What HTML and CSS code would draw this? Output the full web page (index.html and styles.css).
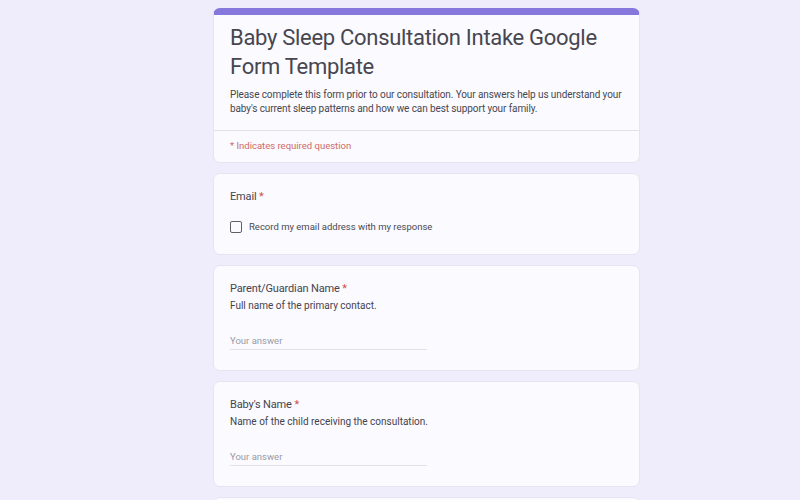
FILE: index.html
```html
<!DOCTYPE html>
<html lang="en">
<head>
<meta charset="utf-8">
<title>Baby Sleep Consultation Intake Google Form Template</title>
<link rel="stylesheet" href="styles.css">
</head>
<body>
<main class="form">
  <section class="card header-card">
    <div class="header-main">
      <h1 class="title">Baby Sleep Consultation Intake Google Form Template</h1>
      <p class="desc">Please complete this form prior to our consultation. Your answers help us understand your baby's current sleep patterns and how we can best support your family.</p>
    </div>
    <div class="required-note">* Indicates required question</div>
  </section>

  <section class="card question">
    <div class="label">Email <span class="star">*</span></div>
    <label class="check-row">
      <span class="checkbox"></span>
      <span class="check-text">Record my email address with my response</span>
    </label>
  </section>

  <section class="card question">
    <div class="label">Parent/Guardian Name <span class="star">*</span></div>
    <div class="help">Full name of the primary contact.</div>
    <div class="answer">Your answer</div>
  </section>

  <section class="card question">
    <div class="label">Baby's Name <span class="star">*</span></div>
    <div class="help">Name of the child receiving the consultation.</div>
    <div class="answer">Your answer</div>
  </section>

  <section class="card question">
    <div class="label">Baby's Date of Birth <span class="star">*</span></div>
    <div class="help">Used to tailor recommendations to your baby's age.</div>
    <div class="answer">Your answer</div>
  </section>
</main>
</body>
</html>
```

FILE: styles.css
```css
html, body {
  margin: 0;
  padding: 0;
}
body {
  background: #efedfb;
  font-family: Roboto, "Liberation Sans", Arial, sans-serif;
  color: #3f3f47;
  overflow: hidden;
  height: 500px;
}
.form {
  width: 427px;
  margin: 8px 0 0 213px;
  display: flex;
  flex-direction: column;
  gap: 10px;
}
.card {
  background: #fafaff;
  border: 1px solid #e6e4f2;
  border-radius: 7px;
  box-sizing: border-box;
}
.header-card {
  border-top: 7px solid #8478dc;
}
.header-main {
  padding: 8px 16px 15px 16px;
  border-bottom: 1px solid #e3e1ec;
}
.title {
  margin: 0;
  font-size: 22px;
  font-weight: 400;
  line-height: 29px;
  letter-spacing: -0.3px;
  color: #47464f;
}
.desc {
  margin: 7px 0 0 0;
  font-size: 10px;
  line-height: 13.5px;
  letter-spacing: -0.1px;
  color: #48474f;
}
.required-note {
  padding: 8px 16px 10px 16px;
  font-size: 9.5px;
  line-height: 13px;
  color: #cf6a66;
}
.question {
  padding: 15px 16px 20px 16px;
}
.label {
  font-size: 11px;
  line-height: 16px;
  letter-spacing: -0.15px;
  color: #45444d;
}
.star {
  color: #d0504c;
}
.check-row {
  display: flex;
  align-items: center;
  gap: 7px;
  margin-top: 15px;
}
.checkbox {
  width: 10px;
  height: 10px;
  border: 1.5px solid #5f5f66;
  border-radius: 2px;
  flex: none;
}
.check-text {
  font-size: 9.5px;
  line-height: 14px;
  color: #4a4a52;
}
.help {
  margin-top: 2px;
  font-size: 10px;
  line-height: 14px;
  color: #45444d;
}
.answer {
  margin-top: 19px;
  width: 197px;
  font-size: 9.5px;
  line-height: 17px;
  color: #9b9ba3;
  border-bottom: 1px solid #e2e1ea;
}
```
